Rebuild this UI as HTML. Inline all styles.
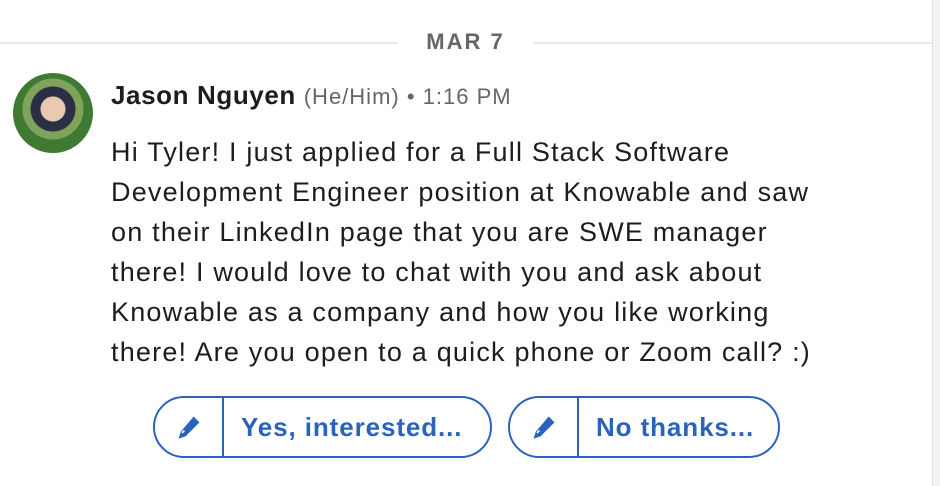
<!DOCTYPE html>
<html><head><style>
body{margin:0;width:940px;height:486px;overflow:hidden;background:#fff;font-family:"Liberation Sans",sans-serif;position:relative}
.sb{position:absolute;left:932px;top:0;width:8px;height:486px;background:#f3f3f3;border-left:1px solid #e2e2e2}
.line{position:absolute;top:42px;height:2px;background:#e8e8e8}
.date{position:absolute;left:398px;width:135px;top:29px;text-align:center;font-size:22px;font-weight:bold;letter-spacing:2px;color:#666}
.av{position:absolute;left:13px;top:73px;width:80px;height:80px;border-radius:50%;background:radial-gradient(circle at 50% 45%,#e9c9b0 0 12px,#2a2f45 13px 22px,#7fa35a 23px 30px,#3e7a32 31px)}
.name{position:absolute;left:111px;top:80px;font-size:26px;font-weight:bold;color:#1d1d1d;letter-spacing:0.6px}
.meta{font-weight:normal;font-size:22px;color:#666;letter-spacing:1px}
.msg{position:absolute;left:111px;top:132px;font-size:27px;line-height:40px;color:#1d1d1d;width:800px;letter-spacing:1.2px;white-space:nowrap}
.btn{position:absolute;top:396px;height:58px;border:2px solid #2a63bd;border-radius:31px;color:#2a63bd;font-size:26px;font-weight:bold;box-sizing:content-box}
.btn .ic{position:absolute;left:0;top:0;width:67px;height:58px;border-right:2px solid #2a63bd;display:flex;align-items:center;justify-content:center}
.btn .t{position:absolute;left:86px;top:14px;white-space:nowrap;letter-spacing:0.9px}
</style></head><body>
<div class="sb"></div>
<div class="line" style="left:0;width:398px"></div>
<div class="line" style="left:533px;width:399px"></div>
<div class="date">MAR 7</div>
<div class="av"></div>
<div class="name">Jason Nguyen <span class="meta">(He/Him) • 1:16 PM</span></div>
<div class="msg">Hi Tyler! I just applied for a Full Stack Software<br>Development Engineer position at Knowable and saw<br>on their LinkedIn page that you are SWE manager<br>there! I would love to chat with you and ask about<br>Knowable as a company and how you like working<br>there! Are you open to a quick phone or Zoom call? :)</div>
<div class="btn" style="left:153px;width:335px"><div class="ic"><svg width="28" height="30" viewBox="0 0 24 24"><path d="M16 3l5 5L9 20l-6 2 2-6z" fill="#2a63bd"/><path d="M6 17l2-2" stroke="#fff" stroke-width="1.5"/></svg></div><span class="t">Yes, interested...</span></div>
<div class="btn" style="left:508px;width:268px"><div class="ic"><svg width="28" height="30" viewBox="0 0 24 24"><path d="M16 3l5 5L9 20l-6 2 2-6z" fill="#2a63bd"/><path d="M6 17l2-2" stroke="#fff" stroke-width="1.5"/></svg></div><span class="t">No thanks...</span></div>
</body></html>
